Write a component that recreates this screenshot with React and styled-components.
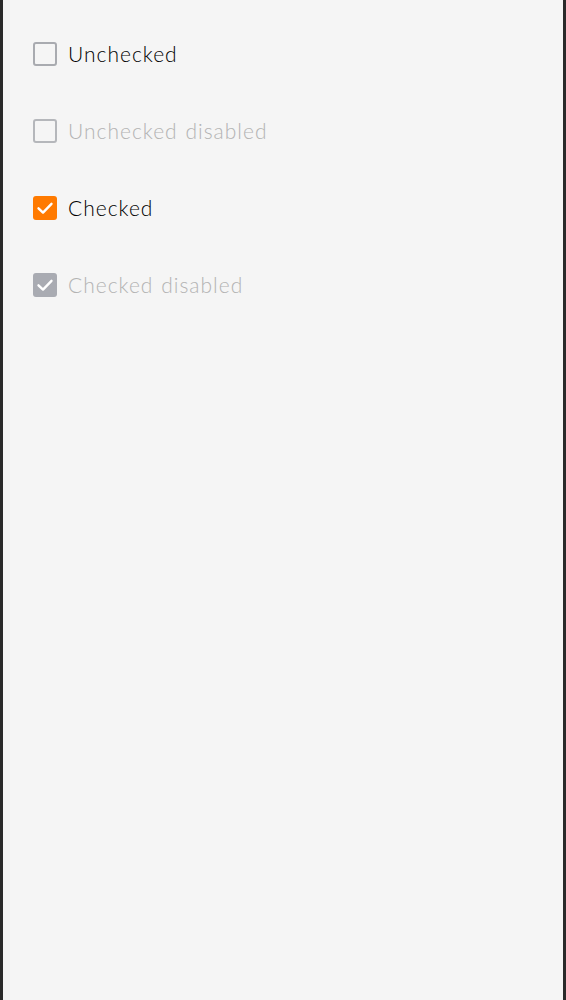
import React from "react";
import styled, { createGlobalStyle } from "styled-components";

const GlobalStyle = createGlobalStyle`
  html, body {
    margin: 0;
    padding: 0;
    background: #f5f5f5;
  }
  * { box-sizing: border-box; }
`;

const items = [
  { label: "Unchecked", checked: false, disabled: false },
  { label: "Unchecked disabled", checked: false, disabled: true },
  { label: "Checked", checked: true, disabled: false },
  { label: "Checked disabled", checked: true, disabled: true },
];

const Check = () => (
  <svg width="24" height="24" viewBox="0 0 24 24" fill="none">
    <path
      d="M5.5 12.3 L10 16.6 L18.5 7.8"
      stroke="#fff"
      strokeWidth="2.4"
      strokeLinecap="round"
      strokeLinejoin="round"
    />
  </svg>
);

export default function App() {
  return (
    <>
      <GlobalStyle />
      <Frame>
        <List>
          {items.map((it) => (
            <Row key={it.label} $disabled={it.disabled}>
              <Box $checked={it.checked} $disabled={it.disabled}>
                {it.checked && <Check />}
              </Box>
              <Label $disabled={it.disabled}>{it.label}</Label>
            </Row>
          ))}
        </List>
      </Frame>
    </>
  );
}

const Frame = styled.div`
  min-height: 100vh;
  border-left: 3px solid #2a2a2a;
  border-right: 3px solid #2a2a2a;
  background: #f5f5f5;
  padding: 42px 30px;
`;

const List = styled.div`
  display: flex;
  flex-direction: column;
  gap: 53px;
`;

const Row = styled.label`
  display: flex;
  align-items: center;
  gap: 11px;
  height: 24px;
  cursor: ${(p) => (p.$disabled ? "default" : "pointer")};
`;

const Box = styled.span`
  width: 24px;
  height: 24px;
  flex: none;
  border-radius: 3px;
  display: flex;
  align-items: center;
  justify-content: center;
  border: ${(p) => (p.$checked ? "none" : "2px solid #a9abb0")};
  background: ${(p) =>
    p.$checked ? (p.$disabled ? "#a9abb2" : "#ff7a00") : "transparent"};
  opacity: ${(p) => (p.$disabled && !p.$checked ? 0.85 : 1)};
`;

const Label = styled.span`
  font-family: Lato, "Open Sans", sans-serif;
  font-size: 21px;
  font-weight: 300;
  letter-spacing: 1px;
  word-spacing: 1px;
  line-height: 24px;
  color: ${(p) => (p.$disabled ? "#b3b3b3" : "#000")};
`;
